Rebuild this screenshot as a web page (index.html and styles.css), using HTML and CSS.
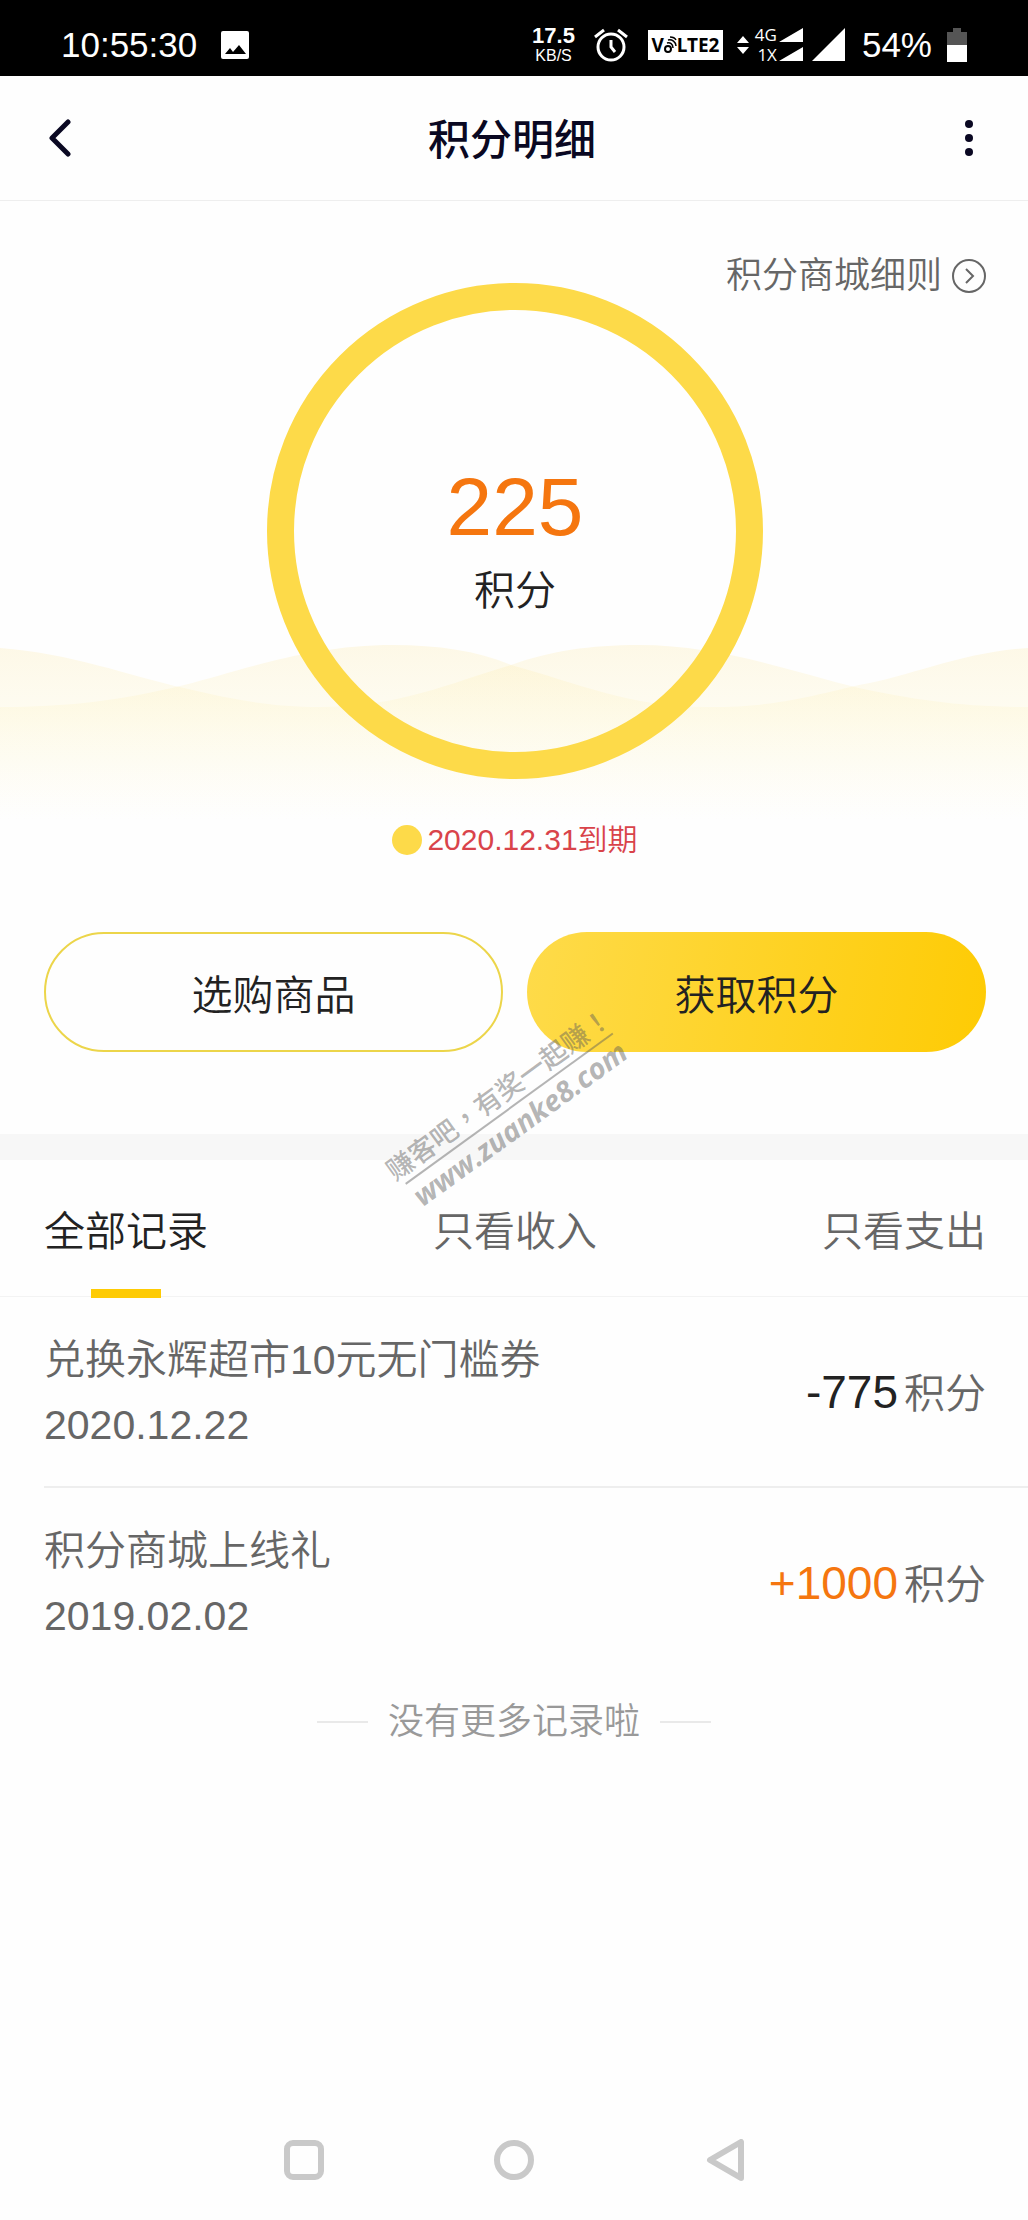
FILE: index.html
```html
<!DOCTYPE html>
<html lang="zh-CN">
<head>
<meta charset="utf-8">
<meta name="viewport" content="width=device-width, initial-scale=1">
<title>积分明细</title>
<link rel="stylesheet" href="styles.css">
</head>
<body>
<div class="status">
  <div class="status-left">
    <span class="status-text">10:55:30</span>
    <svg width="28" height="28" viewBox="0 0 28 28" aria-hidden="true"><rect width="28" height="28" rx="2" fill="#fff"/><path d="M4 23l5-6 3 4 6-7 7 9z" fill="#000"/></svg>
  </div>
  <div class="status-right">
    <div class="speed"><span class="speed-value">17.5</span><span class="speed-unit">KB/S</span></div>
    <svg class="alarm" width="34" height="34" viewBox="0 0 34 34" fill="none" stroke="#fff" aria-hidden="true"><circle cx="17" cy="19" r="13" stroke-width="3"/><path d="M17 12v7l4 5" stroke-width="3"/><path d="M1 9l9-7M33 9l-9-7" stroke-width="3"/></svg>
    <div class="volte"><span>V</span><svg width="13" height="18" viewBox="0 0 13 18" fill="none" stroke="#000" aria-hidden="true"><circle cx="4" cy="13" r="3" stroke-width="2"/><path d="M3 7c3-1 6 1 6 5M4 4c4-1 8 2 8 6M6 1c3 0 5 1 6 3" stroke-width="1.500"/></svg><span>LTE2</span></div>
    <svg class="arrows" width="12" height="18" viewBox="0 0 12 18" fill="#fff" aria-hidden="true"><path d="M0 7l6-7 6 7zM0 11l6 7 6-7z"/></svg>
    <div class="network"><span>4G</span><span>1X</span></div>
    <svg class="bars" width="24" height="34" viewBox="0 0 24 34" fill="#fff" aria-hidden="true"><path d="M0 14L24 0v14zM0 33L24 19v14z"/></svg>
    <svg class="signal" width="33" height="33" viewBox="0 0 33 33" fill="#fff" aria-hidden="true"><path d="M0 33L33 0v33z"/></svg>
    <span class="status-text percent">54%</span>
    <svg width="20" height="34" viewBox="0 0 20 34" aria-hidden="true"><path d="M6 0h8v4h6v14H0V4h6z" fill="#555"/><path d="M0 17h20v17H0z" fill="#fff"/></svg>
  </div>
</div>

<header class="header">
  <button class="icon-button" type="button" aria-label="返回"><svg width="24" height="40" viewBox="0 0 24 40" fill="none" stroke="#0a0822" stroke-width="5" stroke-linecap="round" stroke-linejoin="round"><path d="M21 4L5 20l16 16"/></svg></button>
  <h1 class="title">积分明细</h1>
  <button class="icon-button more" type="button" aria-label="更多"><svg width="8" height="38" viewBox="0 0 8 38" fill="#0a0822"><circle cx="4" cy="5" r="4"/><circle cx="4" cy="19" r="4"/><circle cx="4" cy="33" r="4"/></svg></button>
</header>

<main class="main">
  <section class="summary">
    <svg class="waves" viewBox="0 0 1028 180" preserveAspectRatio="none" aria-hidden="true">
      <defs><linearGradient id="fade" x1="0" y1="0" x2="0" y2="1"><stop offset="0" stop-color="#fbe7a4" stop-opacity=".26"/><stop offset=".4" stop-color="#fdf0b0" stop-opacity=".16"/><stop offset="1" stop-color="#fdf6c8" stop-opacity="0"/></linearGradient></defs>
      <path fill="url(#fade)" d="M0 7C70 12 130 35 184 47C230 58 270 66 320 66C400 66 450 42 511 24C550 10 590 4 639 4C720 4 790 30 859 47C910 58 960 66 1028 66V180H0Z"/>
      <path fill="url(#fade)" d="M1028 7C958 12 913 35 859 44C800 58 770 66 708 66C628 66 578 42 511 24C478 10 438 4 393 4C308 4 240 30 184 44C118 60 68 66 0 66V180H1028Z"/>
    </svg>
    <div class="balance">
      <a class="rules" href="#rules">积分商城细则<svg width="34" height="34" viewBox="0 0 34 34" fill="none" stroke="#666" stroke-width="2" aria-hidden="true"><circle cx="17" cy="17" r="16"/><path d="M14 10l7 7-7 7"/></svg></a>
      <div class="ring"><strong class="points">225</strong><span class="points-label">积分</span></div>
    </div>
    <p class="expiry"><span class="dot"></span>2020.12.31到期</p>
    <div class="actions">
      <button class="action outline" type="button">选购商品</button>
      <button class="action filled" type="button">获取积分</button>
    </div>
    <div class="watermark"><span class="slogan" lang="zh-TW">赚客吧，有奖一起赚！</span><span class="site">www.zuanke8.com</span></div>
  </section>

  <nav class="tabs">
    <a class="tab active" href="#all" aria-current="page">全部记录</a>
    <a class="tab" href="#income">只看收入</a>
    <a class="tab" href="#spend">只看支出</a>
  </nav>

  <ul class="records">
    <li class="record">
      <div class="detail"><span>兑换永辉超市10元无门槛券</span><time datetime="2020-12-22">2020.12.22</time></div>
      <div class="amount"><span class="number">-775</span><span>积分</span></div>
    </li>
    <li class="record">
      <div class="detail"><span>积分商城上线礼</span><time datetime="2019-02-02">2019.02.02</time></div>
      <div class="amount"><span class="number gain">+1000</span><span>积分</span></div>
    </li>
  </ul>
  <p class="end">没有更多记录啦</p>
</main>

<footer class="system-nav">
  <button type="button" aria-label="最近任务"><svg width="42" height="42" viewBox="0 0 42 42"><rect x="4" y="4" width="34" height="34" rx="6"/></svg></button>
  <button type="button" aria-label="主页"><svg width="42" height="42" viewBox="0 0 42 42"><circle cx="21" cy="21" r="17"/></svg></button>
  <button type="button" aria-label="后退"><svg width="42" height="42" viewBox="0 0 42 42"><path d="M38 3v36L7 21z"/></svg></button>
</footer>
</body>
</html>
```

FILE: styles.css
```css
* { box-sizing: border-box; }

body {
  margin: 0;
  min-height: 100vh;
  display: flex;
  flex-direction: column;
  background: #fefefe;
  color: #666;
  font-family: "Liberation Sans", "Noto Sans CJK SC", sans-serif;
  font-size: 41px;
  font-weight: 350;
}

button {
  margin: 0;
  padding: 0;
  border: 0;
  background: none;
  color: inherit;
  font: inherit;
}

a { color: inherit; text-decoration: none; }
svg { display: block; flex: none; }

/* Device status bar */
.status {
  height: 76px;
  padding: 13px 61px 0 61px;
  display: flex;
  justify-content: space-between;
  background: #000;
  color: #fff;
}
.status-left, .status-right { display: flex; align-items: center; }
.status-left { gap: 24px; }
.status-text { font-size: 35px; line-height: 40px; }
.speed { display: flex; flex-direction: column; align-items: center; }
.speed-value { font-size: 22px; line-height: 22px; font-weight: 700; }
.speed-unit { font-size: 16px; line-height: 18px; }
.alarm { margin-left: 19px; }
.volte {
  height: 30px;
  width: 75px;
  margin-left: 20px;
  display: flex;
  align-items: center;
  justify-content: center;
  background: #fff;
  color: #000;
  font: 700 19px/30px "Noto Sans", sans-serif;
}
.arrows { margin-left: 14px; }
.network {
  width: 24px;
  margin: 0 2px 0 4px;
  display: flex;
  flex-direction: column;
  align-items: flex-end;
  font: 500 17px/20px "Open Sans", sans-serif;
}
.signal { margin-left: 9px; }
.percent { margin: 0 15px 0 17px; }

/* Page header */
.header {
  height: 125px;
  padding: 0 47px;
  display: grid;
  grid-template-columns: 1fr auto 1fr;
  align-items: center;
  border-bottom: 1px solid #eee;
}
.icon-button { justify-self: start; }
.more { justify-self: end; padding-right: 8px; }
.title { margin: 0; padding: 0 4px 4px 0; color: #0a0822; font-size: 42px; font-weight: 500; }

/* Balance */
.summary {
  position: relative;
  padding: 0 42px 82px 44px;
  border-bottom: 26px solid #f7f7f7;
}
.waves {
  position: absolute;
  top: 440px;
  left: 0;
  width: 100%;
  height: 180px;
}
.balance { position: relative; display: grid; padding-top: 82px; }
.rules {
  grid-area: 1 / 1;
  place-self: start end;
  margin-top: -33px;
  display: flex;
  align-items: center;
  gap: 10px;
  font-size: 36px;
  line-height: 52px;
}
.ring {
  grid-area: 1 / 1;
  justify-self: center;
  width: 496px;
  height: 496px;
  border: 27px solid #fdda49;
  border-radius: 50%;
  display: flex;
  flex-direction: column;
  align-items: center;
  justify-content: center;
  gap: 8px;
  padding-top: 20px;
}
.points { color: #f5760f; font-size: 82px; line-height: 92px; font-weight: 400; }
.points-label { color: #222; line-height: 60px; }
.expiry {
  position: relative;
  margin: 40px 0 0;
  display: flex;
  align-items: center;
  justify-content: center;
  gap: 5px;
  color: #d9434a;
  font-size: 30px;
  line-height: 42px;
}
.dot { width: 30px; height: 30px; border-radius: 50%; background: #fdda49; }
.actions { margin-top: 71px; display: grid; grid-template-columns: 1fr 1fr; gap: 24px; }
.action {
  height: 120px;
  border-radius: 60px;
  color: #222;
}
.outline { border: 2px solid #ecd54a; }
.filled { background: linear-gradient(100deg, #fedb4a, #fecb04); }

/* Site mark laid over the page */
.watermark {
  position: absolute;
  z-index: 1;
  left: 50%;
  bottom: -14px;
  width: 270px;
  margin-left: -146px;
  transform: rotate(-36deg);
  color: rgba(90, 90, 90, .45);
  font-weight: 500;
  white-space: nowrap;
  display: flex;
  flex-direction: column;
  align-items: flex-end;
  pointer-events: none;
}
.slogan {
  width: 256px;
  border-bottom: 2px solid rgba(90, 90, 90, .45);
  font: 500 27px/36px "Noto Sans CJK TC", sans-serif;
  display: flex;
  justify-content: center;
}
.site { font: italic 700 29px/34px "Open Sans", sans-serif; }

/* Record filter */
.tabs {
  height: 137px;
  padding: 0 42px 0 44px;
  display: flex;
  justify-content: space-between;
  border-bottom: 1px solid #f3f3f3;
}
.tab { position: relative; line-height: 144px; }
.active { color: #222; }
.active::after {
  content: "";
  position: absolute;
  top: 129px;
  left: 50%;
  width: 70px;
  height: 9px;
  margin-left: -35px;
  background: #fecb04;
}

/* Records */
.records { margin: 0; padding: 0 0 0 44px; list-style: none; }
.record {
  padding: 31px 42px 28px 0;
  display: flex;
  align-items: center;
  justify-content: space-between;
}
.record + .record { border-top: 2px solid #eee; }
.detail { display: flex; flex-direction: column; line-height: 65px; }
.amount { display: flex; align-items: baseline; gap: 6px; line-height: 65px; }
.number { color: #222; font-size: 46px; }
.gain { color: #f5760f; }

.end {
  margin: 20px 0;
  display: flex;
  align-items: center;
  justify-content: center;
  gap: 20px;
  color: #999;
  font-size: 36px;
  line-height: 50px;
}
.end::before, .end::after { content: ""; width: 51px; height: 2px; background: #e9e9e9; }

/* Device navigation */
.system-nav {
  height: 120px;
  margin-top: auto;
  display: flex;
  align-items: center;
  justify-content: center;
  gap: 168px;
}
.system-nav svg { fill: none; stroke: #c9c9c9; stroke-width: 6; stroke-linejoin: round; }
```
